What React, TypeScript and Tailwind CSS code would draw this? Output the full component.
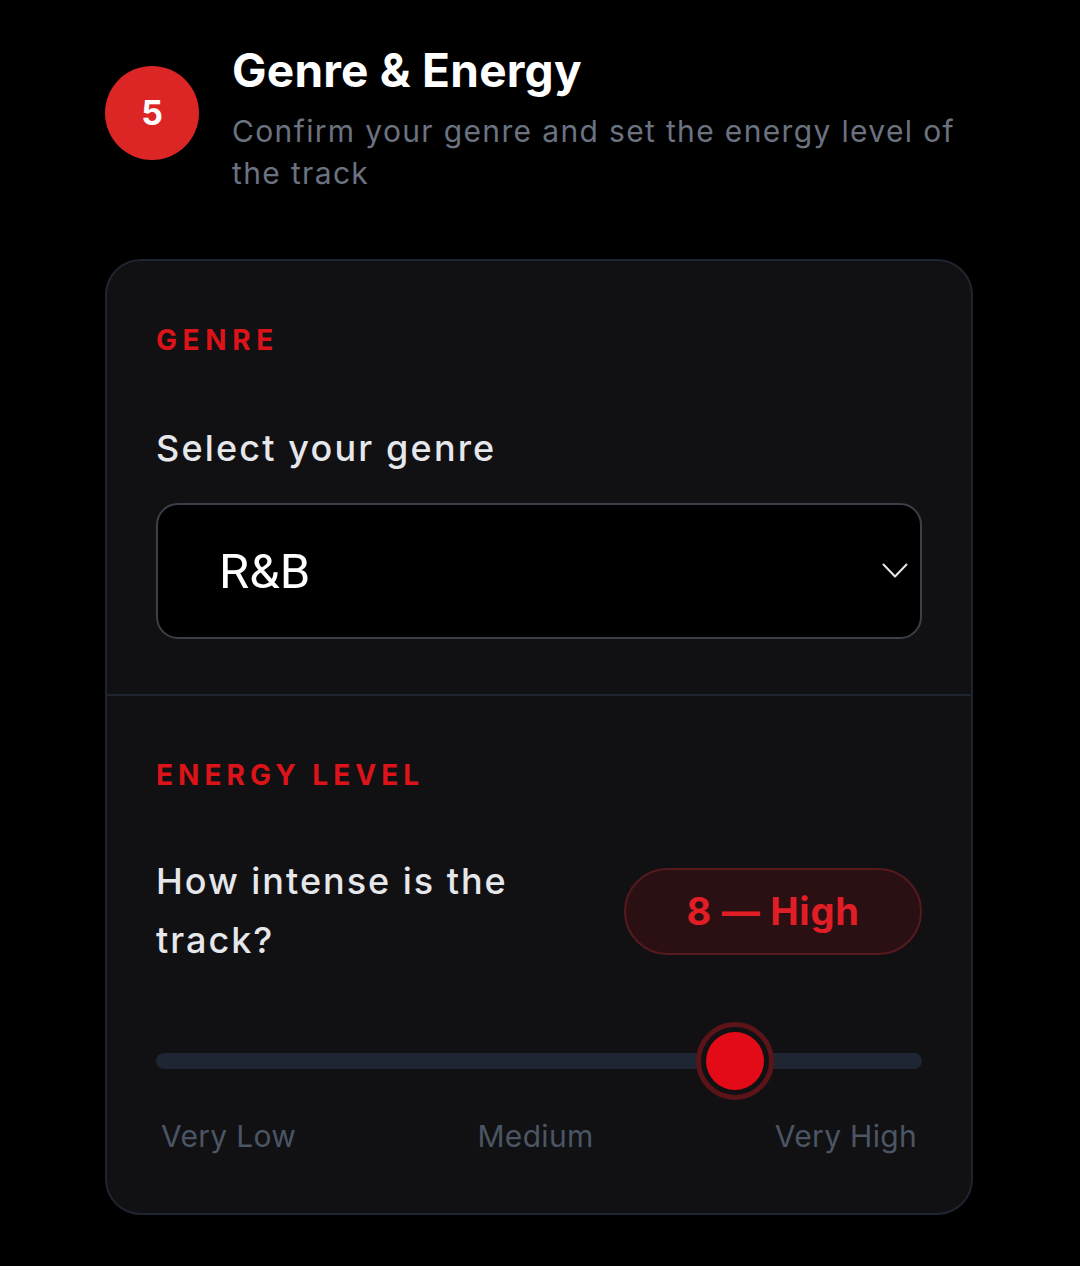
import React, { useState } from 'react';

const LABELS: Record<number, string> = {
  1: 'Very Low',
  2: 'Very Low',
  3: 'Low',
  4: 'Low',
  5: 'Medium',
  6: 'Medium',
  7: 'High',
  8: 'High',
  9: 'Very High',
  10: 'Very High',
};

export default function App() {
  const [genre] = useState('R&B');
  const [energy] = useState(8);

  // thumb travels inside the track, inset by its radius
  const pct = (energy - 1) / 9;

  return (
    <div
      className="bg-black min-h-[1266px] w-[1080px] pt-[44px] pl-[105px] pr-[107px]"
      style={{ fontFamily: 'Inter, "Noto Sans", sans-serif' }}
    >
      {/* Step header */}
      <div className="flex items-start gap-[33px]">
        <div className="mt-[22px] w-[94px] h-[94px] shrink-0 rounded-full bg-[#dc2626] flex items-center justify-center">
          <span className="text-white font-bold text-[34px] leading-none">5</span>
        </div>
        <div>
          <h1 className="text-white font-bold text-[46px] leading-[52px] tracking-[0.005em]">Genre &amp; Energy</h1>
          <p className="mt-[14px] text-[#6b7280] text-[30px] leading-[42px] tracking-[0.045em] max-w-[740px]">
            Confirm your genre and set the energy level of the track
          </p>
        </div>
      </div>

      {/* Card */}
      <div className="mt-[65px] w-[868px] rounded-[36px] border-2 border-[#1f2530] bg-[#111113] overflow-hidden">
        {/* Genre */}
        <div className="pt-[62px] pb-[55px] px-[49px]">
          <div className="text-[#dc1419] font-bold text-[28px] leading-[34px] tracking-[0.2em]">GENRE</div>
          <div className="mt-[69px] text-[#e5e7eb] text-[36px] leading-[44px] font-medium tracking-[0.06em]">Select your genre</div>
          <div className="mt-[33px] h-[136px] rounded-[22px] border-2 border-[#3a3f4a] bg-black flex items-center justify-between pl-[61px] pr-[12px]">
            <span className="text-white text-[49px] leading-none" style={{ fontFamily: 'Roboto, sans-serif' }}>{genre}</span>
            <svg width="26" height="16" viewBox="0 0 26 16" fill="none">
              <path d="M1.5 1.5 L13 13.5 L24.5 1.5" stroke="#e5e7eb" strokeWidth="2" strokeLinecap="round" strokeLinejoin="round" />
            </svg>
          </div>
        </div>

        <div className="h-[2px] bg-[#1f2530]" />

        {/* Energy */}
        <div className="pt-[62px] pb-[57px] px-[49px]">
          <div className="text-[#dc1419] font-bold text-[28px] leading-[34px] tracking-[0.18em]">ENERGY LEVEL</div>
          <div className="mt-[60px] flex items-center justify-between">
            <div className="w-[420px] text-[#e5e7eb] text-[36px] leading-[59px] font-medium tracking-[0.055em]">How intense is the track?</div>
            <div className="w-[298px] h-[87px] rounded-full bg-[#2a1013] border-2 border-[#561a1e] flex items-center justify-center">
              <span className="text-[#e11d26] font-bold text-[38px] tracking-[0.02em]">
                {energy} — {LABELS[energy]}
              </span>
            </div>
          </div>

          {/* Slider */}
          <div className="mt-[52px] relative h-[78px] flex items-center">
            <div className="w-full h-[16px] rounded-full bg-[#1e2533]" />
            <div
              className="absolute top-0 w-[78px] h-[78px] rounded-full border-[5px] border-[#5c1419] bg-[#111113] flex items-center justify-center"
              style={{ left: `calc(${pct * 100}% - ${pct * 78 - 5}px)` }}
            >
              <div className="w-[58px] h-[58px] rounded-full bg-[#e30b17]" />
            </div>
          </div>

          <div className="mt-[16px] flex justify-between px-[5px] text-[#4b5563] text-[30px] leading-[40px] tracking-[0.01em]">
            <span>Very Low</span>
            <span>Medium</span>
            <span>Very High</span>
          </div>
        </div>
      </div>
    </div>
  );
}
